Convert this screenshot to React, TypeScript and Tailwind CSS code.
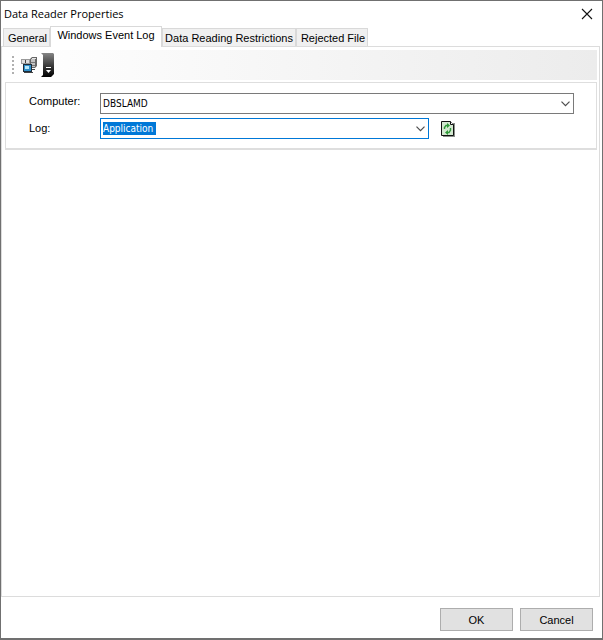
import React, { useState } from 'react';

const tabs = [
  { name: 'General', size: 'w-[47px] pl-[2px]' },
  { name: 'Windows Event Log', size: 'w-28' },
  { name: 'Data Reading Restrictions', size: 'w-[134px]' },
  { name: 'Rejected File', size: 'w-[72px] pl-[2px]' },
];

function Chevron() {
  return (
    <svg className="pointer-events-none absolute top-2 right-1" width="9" height="6" viewBox="0 0 9 6" fill="none" stroke="#4d4d4d" strokeWidth="1.2" aria-hidden="true">
      <path d="M0.5 0.7L4.5 4.7L8.5 0.7" />
    </svg>
  );
}

function ComputersIcon() {
  return (
    <svg width="17" height="17" viewBox="0 0 17 17" aria-hidden="true">
      <path d="M9 2L11 0H16V9L14 11H9Z" fill="#666" />
      <path d="M10 2H14V10H10Z" fill="#c2c2c2" />
      <path d="M11 1H15V2H11Z" fill="#e4e4e4" />
      <path d="M10 5H14V6H10ZM10 8H14V9H10Z" fill="#777" />
      <path d="M0 2H9V7H0Z" fill="#999" />
      <path d="M1 3H4V6H1ZM5 3H8V6H5Z" fill="#dedede" />
      <path d="M4 3H5V6H4Z" fill="#444" />
      <path d="M2 7H11V15H2Z" fill="#1c2c3a" />
      <path d="M3 8H10V14H3Z" fill="#2f8fc9" />
      <path d="M4 9H8V12H4Z" fill="#b9e8fb" />
      <path d="M3 15H12V16H3Z" fill="#444" />
      <path d="M11 12H14V13H11Z" fill="#444" />
    </svg>
  );
}

function RefreshIcon() {
  return (
    <svg width="14" height="16" viewBox="0 0 14 16" aria-hidden="true">
      <path d="M2 2H14V16H2Z" fill="#8a8f8a" />
      <path d="M0.5 0.5H9.5L12.5 3.5V14.5H0.5Z" fill="#d3e8d0" stroke="#111" />
      <path d="M9.5 0.5V3.5H12.5" fill="#fff" stroke="#111" />
      <path d="M3.5 8V6.5L5 4.5H7M9.5 7V9L8 11.5H6" fill="none" stroke="#2f9a38" strokeWidth="1.4" />
      <path d="M6 2L9 4.5L6 7ZM7 9L4 11.5L7 14Z" fill="#2f9a38" />
    </svg>
  );
}

export default function App() {
  const [active, setActive] = useState('Windows Event Log');

  return (
    <main className="flex min-h-screen flex-col border border-b-2 border-[#707070] bg-white font-['Liberation_Sans',Arial,sans-serif] text-[11px] text-black">
      <header className="flex h-[25px] items-center justify-between pr-[9px] pl-[3px]">
        <h1 className="font-['Open_Sans','Noto_Sans',sans-serif] text-[11px] leading-4">Data Reader Properties</h1>
        <button aria-label="Close" className="block">
          <svg width="12" height="12" viewBox="0 0 12 12" stroke="#111" strokeWidth="1.1" aria-hidden="true">
            <path d="M1 1L11 11M11 1L1 11" />
          </svg>
        </button>
      </header>

      <div role="tablist" className="flex h-5 items-end pl-[2px]">
        {tabs.map((tab) => (
          <button
            key={tab.name}
            role="tab"
            aria-selected={active === tab.name}
            onClick={() => setActive(tab.name)}
            className={`${tab.size} shrink-0 whitespace-nowrap border border-b-0 border-[#d9d9d9] text-center leading-4 ${
              active === tab.name ? 'z-10 -mb-px h-[21px] bg-white pb-1' : 'h-[18px] bg-[#f0f0f0]'
            }`}
          >
            {tab.name}
          </button>
        ))}
      </div>

      <section role="tabpanel" className="mr-[2px] flex grow flex-col border border-[#dcdcdc] pt-[3px] pr-[2px] pl-[3px]">
        <div className="flex h-[30px] items-center bg-linear-to-r from-white to-[#ececec] pl-[7px]">
          <div className="flex w-[9px] flex-col gap-[2px]" aria-hidden="true">
            {[0, 1, 2, 3, 4].map((dot) => (
              <span key={dot} className="size-[2px] bg-[#b0b0b0]" />
            ))}
          </div>
          <button aria-label="Select computer" className="block">
            <ComputersIcon />
          </button>
          <button aria-label="Toolbar options" className="ml-[3px] block">
            <svg width="13" height="24" viewBox="0 0 13 24" aria-hidden="true">
              <defs>
                <linearGradient id="overflow" x1="0" y1="0" x2="0" y2="1">
                  <stop offset="0" stopColor="#858585" />
                  <stop offset="0.6" stopColor="#303030" />
                  <stop offset="1" stopColor="#000" />
                </linearGradient>
              </defs>
              <path d="M0 0H12L13 1V21L10 24H0L2 22V2Z" fill="url(#overflow)" />
              <path d="M5 14.5H10" stroke="#fff" />
              <path d="M5 17H10L7.5 20Z" fill="#fff" />
            </svg>
          </button>
        </div>

        <form className="mt-[2px] flex h-[68px] flex-col gap-1 border border-b-2 border-[#dedede] pt-[10px] pr-[22px] pl-[23px]">
          <div className="flex">
            <label htmlFor="computer" className="w-[71px] shrink-0 leading-4">Computer:</label>
            <div className="relative grow">
              <select id="computer" className="block h-[21px] w-full appearance-none border border-[#7a7a7a] bg-white pl-[2px] font-['DejaVu_Sans_Condensed','DejaVu_Sans',sans-serif] text-[10px] leading-4 outline-none">
                <option>DBSLAMD</option>
              </select>
              <Chevron />
            </div>
          </div>
          <div className="flex">
            <label htmlFor="log" className="w-[71px] shrink-0 pt-[2px] leading-4">Log:</label>
            <div className="relative mr-3 grow">
              <select id="log" className="block h-[21px] w-full appearance-none border border-[#0078d7] bg-white bg-[linear-gradient(#0078d7,#0078d7)] bg-[length:53px_13px] bg-[position:2px_3px] bg-no-repeat pl-[2px] font-['DejaVu_Sans_Condensed','DejaVu_Sans',sans-serif] text-[10px] leading-4 text-white outline-none">
                <option>Application</option>
              </select>
              <Chevron />
            </div>
            <button type="button" aria-label="Refresh logs" className="mr-[119px] flex w-[14px] items-center">
              <RefreshIcon />
            </button>
          </div>
        </form>
      </section>

      <footer className="flex h-[41px] items-center justify-end gap-[7px] pt-1 pr-[9px]">
        <button className="h-[23px] w-[73px] border border-[#adadad] bg-[#e1e1e1] leading-4">OK</button>
        <button className="h-[23px] w-[73px] border border-[#adadad] bg-[#e1e1e1] leading-4">Cancel</button>
      </footer>
    </main>
  );
}
